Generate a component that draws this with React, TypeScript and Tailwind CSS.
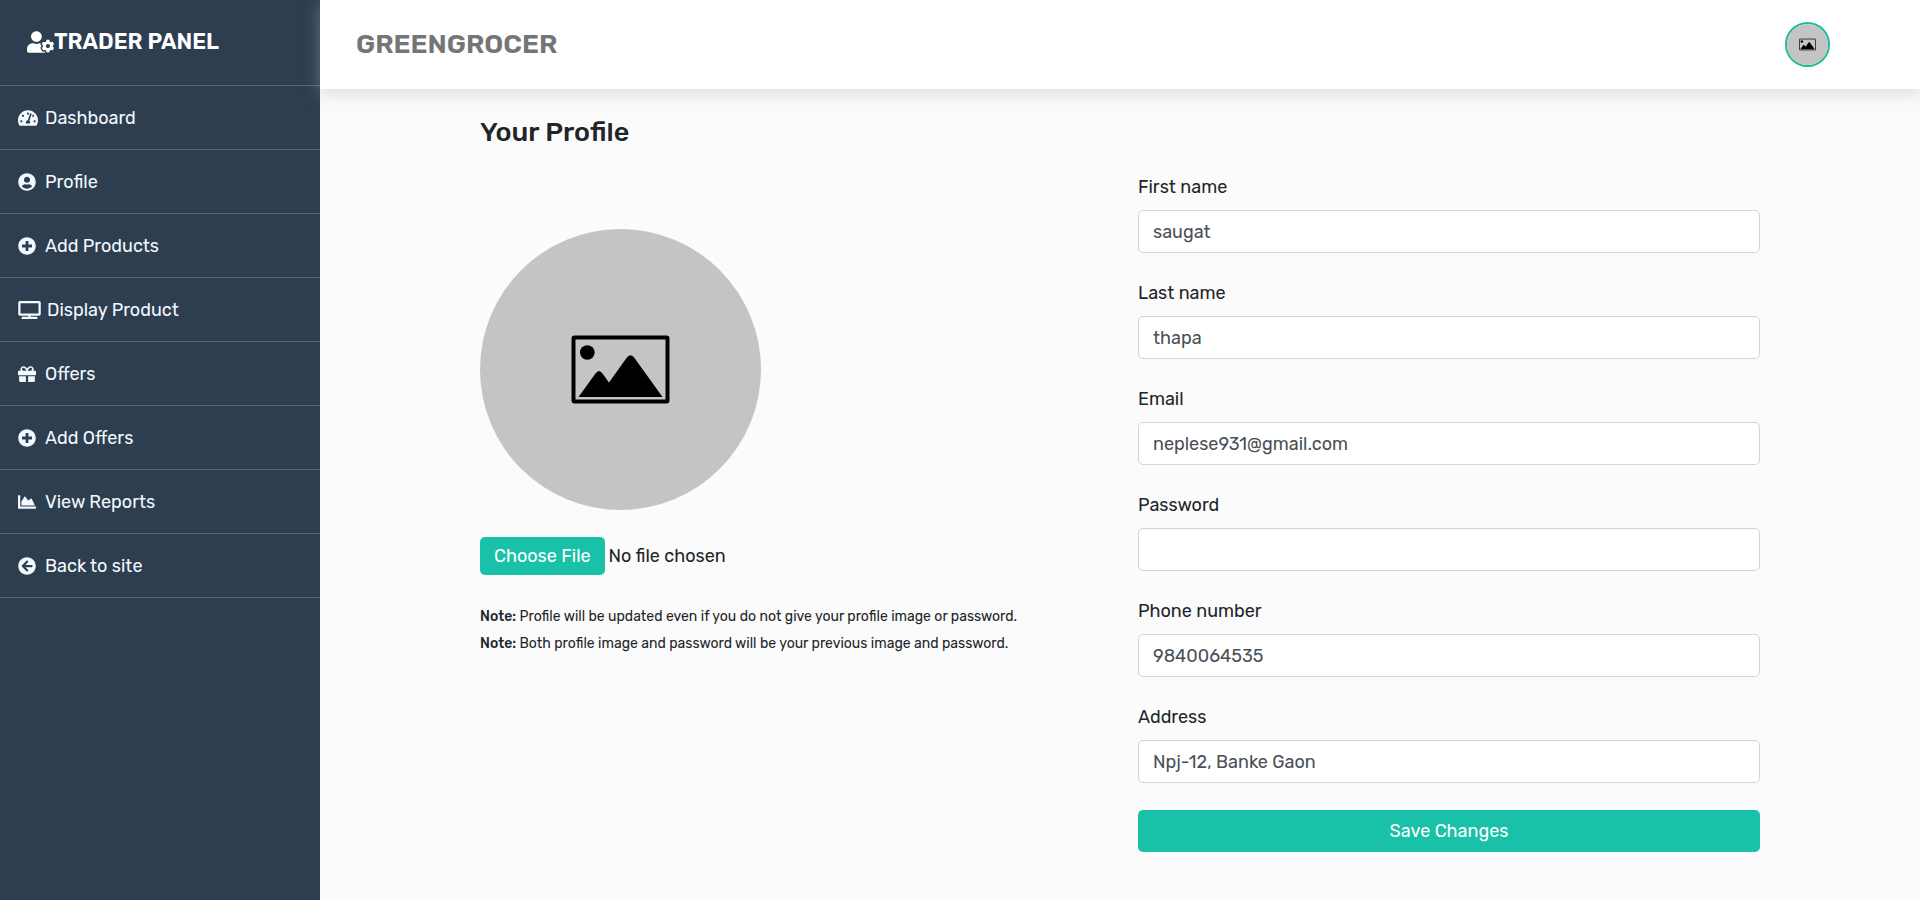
import React from "react";
import type { IconType } from "react-icons";
import {
  FaUserCog,
  FaTachometerAlt,
  FaUserCircle,
  FaPlusCircle,
  FaTv,
  FaGift,
  FaChartArea,
  FaArrowCircleLeft,
} from "react-icons/fa";

const navItems: { label: string; icon: IconType; iconClass: string }[] = [
  { label: "Dashboard", icon: FaTachometerAlt, iconClass: "h-[18px] w-5" },
  { label: "Profile", icon: FaUserCircle, iconClass: "size-[18px]" },
  { label: "Add Products", icon: FaPlusCircle, iconClass: "size-[18px]" },
  { label: "Display Product", icon: FaTv, iconClass: "h-[18px] w-[23px]" },
  { label: "Offers", icon: FaGift, iconClass: "size-[18px]" },
  { label: "Add Offers", icon: FaPlusCircle, iconClass: "size-[18px]" },
  { label: "View Reports", icon: FaChartArea, iconClass: "size-[18px]" },
  { label: "Back to site", icon: FaArrowCircleLeft, iconClass: "size-[18px]" },
];

const fields = [
  { id: "first-name", label: "First name", type: "text", value: "saugat" },
  { id: "last-name", label: "Last name", type: "text", value: "thapa" },
  { id: "email", label: "Email", type: "email", value: "neplese931@gmail.com" },
  { id: "password", label: "Password", type: "password", value: "" },
  { id: "phone", label: "Phone number", type: "tel", value: "9840064535" },
  { id: "address", label: "Address", type: "text", value: "Npj-12, Banke Gaon" },
];

function PlaceholderImage({ className, viewBox = "0 0 281 281" }: { className: string; viewBox?: string }) {
  return (
    <svg viewBox={viewBox} className={className} role="img" aria-label="Profile image">
      <rect width="281" height="281" fill="#c4c4c4" />
      <rect x="93.5" y="108.5" width="94" height="64" rx="1" fill="none" stroke="#000" strokeWidth="4" />
      <circle cx="107.3" cy="123.5" r="7.3" />
      <path d="M98.5 168 L115.5 144.500 Q119 139.500 122.500 144.500 L129 153.500 L146.500 129 Q150.500 123.500 154.500 129 L182.500 168 Z" />
    </svg>
  );
}

function Sidebar() {
  return (
    <aside className="w-80 shrink-0 bg-[#2d3e50] text-[#f4f8ff]">
      <div className="flex h-[86px] items-start border-b border-[#566778] px-[27px] pt-7 text-white">
        <h2 className="flex items-center text-[22px] leading-7 font-semibold">
          <FaUserCog className="h-[22px] w-[27px]" />
          TRADER PANEL
        </h2>
      </div>
      <nav>
        {navItems.map(({ label, icon: Icon, iconClass }) => (
          <a
            key={label}
            href="#"
            className="flex h-16 items-center gap-1.5 border-b border-[#566778] px-[18px] text-lg"
          >
            <span className="min-w-[21px]">
              <Icon className={iconClass} />
            </span>
            {label}
          </a>
        ))}
      </nav>
    </aside>
  );
}

function Header() {
  return (
    <header className="relative flex h-[89px] items-center justify-between bg-white pr-[90px] pl-9 shadow-[0_4px_16px_rgba(176,176,176,0.45)]">
      <h1 className="pb-0.5 text-[27px] leading-8 font-semibold text-[#757575]">GREENGROCER</h1>
      <button type="button" aria-label="Account" className="size-[45px] rounded-full border-2 border-[#1abc9c]">
        <PlaceholderImage className="size-full rounded-full" viewBox="20 20 241 241" />
      </button>
    </header>
  );
}

export default function App() {
  return (
    <div className="flex min-h-screen bg-[#fbfbfb] font-['Rubik','Roboto',sans-serif] text-[#212529]">
      <Sidebar />
      <div className="flex-1">
        <Header />
        <main className="mx-auto w-4/5 pt-[27px] pb-12">
          <h2 className="text-[27px] leading-8 font-medium">Your Profile</h2>
          <form className="mt-[26px] grid grid-cols-2 gap-9">
            <div className="pt-[55px]">
              <PlaceholderImage className="size-[281px] rounded-full" />
              <input
                type="file"
                aria-label="Profile image"
                className="mt-[27px] block w-full text-lg file:h-[38px] file:rounded-[5px] file:bg-[#18c1a8] file:px-[14px] file:text-lg file:text-white"
              />
              <div className="mt-7 text-sm leading-[27px]">
                <p>
                  <strong className="font-medium">Note:</strong> Profile will be updated even if you do not give your
                  profile image or password.
                </p>
                <p>
                  <strong className="font-medium">Note:</strong> Both profile image and password will be your previous
                  image and password.
                </p>
              </div>
            </div>
            <div className="flex flex-col gap-[27px]">
              {fields.map(({ id, label, type, value }) => (
                <div key={id} className="flex flex-col gap-[9px]">
                  <label htmlFor={id} className="text-lg leading-[27px]">
                    {label}
                  </label>
                  <input
                    id={id}
                    type={type}
                    defaultValue={value}
                    className="h-[43px] w-full rounded-[5px] border border-[#ced4da] bg-white px-[14px] text-lg text-[#495057]"
                  />
                </div>
              ))}
              <button type="submit" className="h-[42px] rounded-[5px] bg-[#18c1a8] text-lg text-white">
                Save Changes
              </button>
            </div>
          </form>
        </main>
      </div>
    </div>
  );
}
